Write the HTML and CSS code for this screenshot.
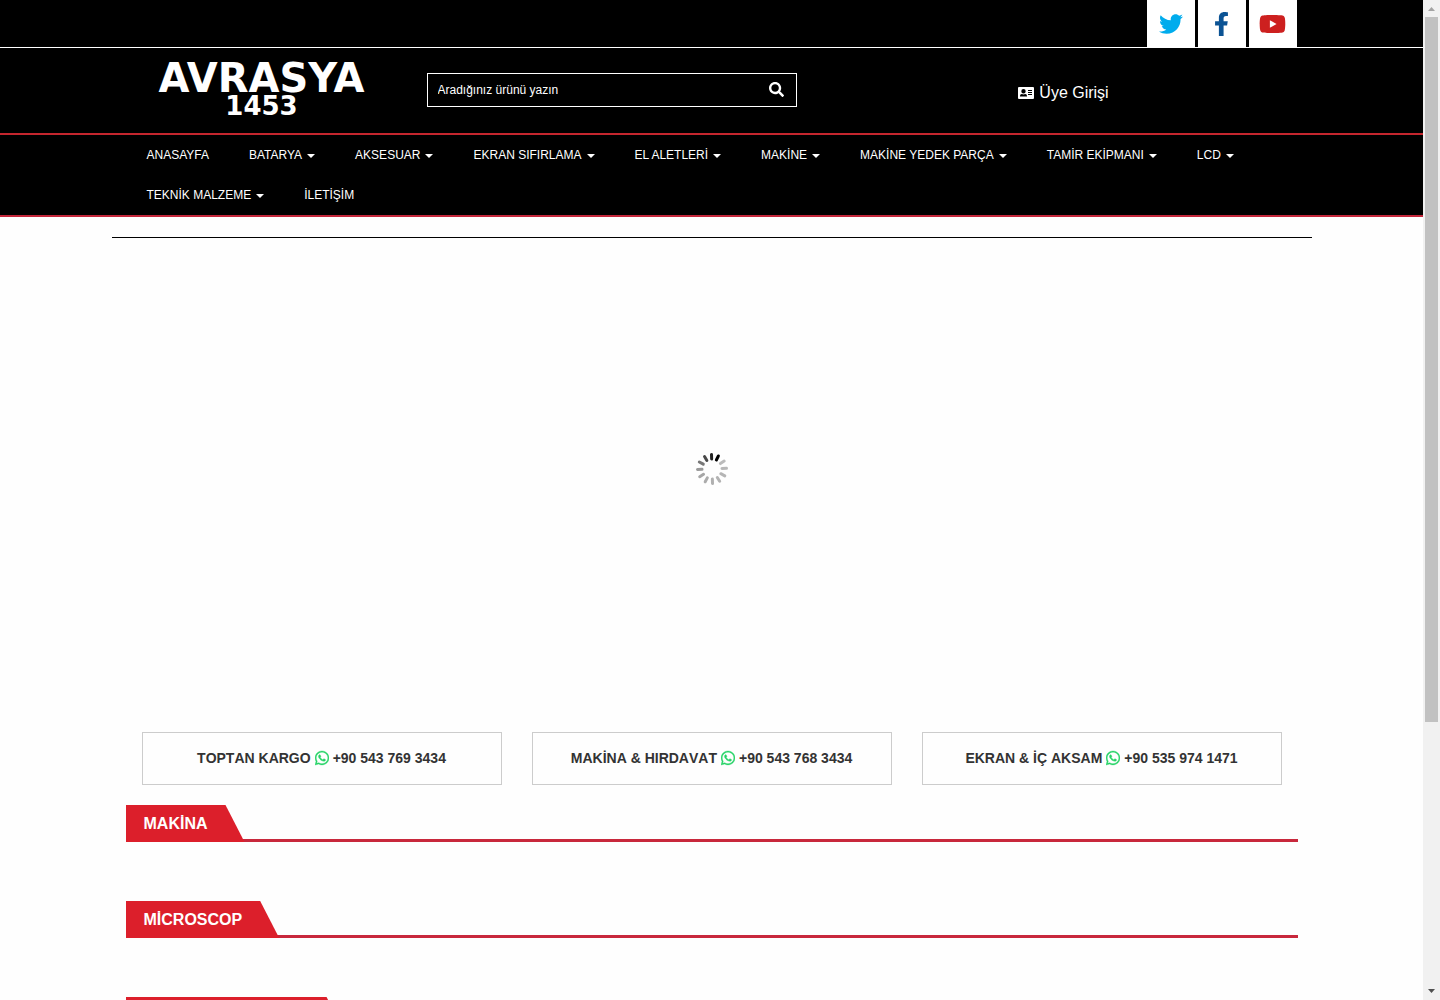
FILE: index.html
```html
<!DOCTYPE html>
<html lang="tr">
<head>
<meta charset="utf-8">
<meta name="viewport" content="width=device-width, initial-scale=1">
<title>Avrasya 1453</title>
<link rel="stylesheet" href="styles.css">
</head>
<body>
<svg class="defs" aria-hidden="true">
  <symbol id="whatsapp" viewBox="0 0 448 512"><path d="M380.9 97.1C339 55.1 283.2 32 223.9 32c-122.4 0-222 99.6-222 222 0 39.1 10.2 77.3 29.6 111L0 480l117.7-30.9c32.4 17.7 68.9 27 106.1 27h.1c122.3 0 224.1-99.6 224.1-222 0-59.3-25.200-115-67.100-157zm-157 341.600c-33.200 0-65.700-8.900-94-25.700l-6.700-4-69.800 18.300L72 359.200l-4.400-7c-18.500-29.400-28.200-63.300-28.200-98.200 0-101.700 82.800-184.500 184.600-184.500 49.300 0 95.600 19.200 130.400 54.100 34.800 34.900 56.200 81.200 56.100 130.500 0 101.800-84.900 184.600-186.600 184.600zm101.200-138.200c-5.500-2.800-32.800-16.200-37.900-18-5.100-1.900-8.800-2.800-12.500 2.800-3.700 5.600-14.300 18-17.600 21.800-3.200 3.700-6.500 4.200-12 1.400-32.600-16.300-54-29.100-75.500-66-5.700-9.800 5.700-9.100 16.300-30.300 1.800-3.700.9-6.900-.5-9.700-1.400-2.800-12.500-30.100-17.100-41.200-4.500-10.800-9.100-9.300-12.500-9.500-3.200-.2-6.900-.2-10.600-.2-3.700 0-9.700 1.400-14.800 6.900-5.100 5.600-19.400 19-19.400 46.300 0 27.300 19.900 53.700 22.600 57.400 2.800 3.700 39.100 59.700 94.800 83.800 35.200 15.200 49 16.500 66.600 13.900 10.700-1.600 32.800-13.400 37.400-26.400 4.600-13 4.600-24.100 3.200-26.400-1.300-2.500-5-3.900-10.500-6.600z"/></symbol>
</svg>
<div class="window">
  <div class="page">
    <div class="topbar">
      <div class="container social">
        <a href="#" class="social-link twitter" aria-label="Twitter"><svg width="24" height="24" viewBox="0 0 512 512"><path d="M459.370 151.716c.325 4.548.325 9.097.325 13.645 0 138.720-105.583 298.558-298.558 298.558-59.452 0-114.680-17.219-161.137-47.106 8.447.974 16.568 1.299 25.340 1.299 49.055 0 94.213-16.568 130.274-44.832-46.132-.975-84.792-31.188-98.112-72.772 6.498.974 12.995 1.624 19.818 1.624 9.421 0 18.843-1.300 27.614-3.573-48.081-9.747-84.143-51.980-84.143-102.985v-1.299c13.969 7.797 30.214 12.670 47.431 13.319-28.264-18.843-46.781-51.005-46.781-87.391 0-19.492 5.197-37.360 14.294-52.954 51.655 63.675 129.300 105.258 216.365 109.807-1.624-7.797-2.599-15.918-2.599-24.040 0-57.828 46.782-104.934 104.934-104.934 30.213 0 57.502 12.670 76.670 33.137 23.715-4.548 46.456-13.320 66.599-25.340-7.798 24.366-24.366 44.833-46.132 57.827 21.117-2.273 41.584-8.122 60.426-16.243-14.292 20.791-32.161 39.308-52.628 54.253z"/></svg></a>
        <a href="#" class="social-link facebook" aria-label="Facebook"><svg width="15" height="24" viewBox="0 0 320 512"><path d="M279.140 288l14.220-92.660h-88.910v-60.130c0-25.350 12.420-50.060 52.240-50.060h40.420V6.260S260.430 0 225.360 0c-73.220 0-121.080 44.380-121.080 124.720v70.620H22.890V288h81.390v224h100.170V288z"/></svg></a>
        <a href="#" class="social-link youtube" aria-label="YouTube"><svg width="27" height="24" viewBox="0 0 576 512"><path d="M549.655 124.083c-6.281-23.650-24.787-42.276-48.284-48.597C458.781 64 288 64 288 64S117.220 64 74.629 75.486c-23.497 6.322-42.003 24.947-48.284 48.597-11.412 42.867-11.412 132.305-11.412 132.305s0 89.438 11.412 132.305c6.281 23.650 24.787 41.500 48.284 47.821C117.220 448 288 448 288 448s170.780 0 213.371-11.486c23.497-6.321 42.003-24.171 48.284-47.821 11.412-42.867 11.412-132.305 11.412-132.305s0-89.438-11.412-132.305zm-317.510 213.508V175.185l142.739 81.205-142.739 81.201z"/></svg></a>
      </div>
    </div>
    <header class="header">
      <div class="container header-grid">
        <a href="#" class="logo"><span class="logo-name">AVRASYA</span><span class="logo-year">1453</span></a>
        <form class="search">
          <input class="search-input" type="text" placeholder="Aradığınız ürünü yazın" aria-label="Aradığınız ürünü yazın">
          <button class="search-button" type="button" aria-label="Ara"><svg width="15" height="15" viewBox="0 0 512 512"><path d="M505 442.700L405.300 343c-4.500-4.500-10.600-7-17-7H372c27.600-35.300 44-79.700 44-128C416 93.100 322.900 0 208 0S0 93.100 0 208s93.100 208 208 208c48.300 0 92.700-16.400 128-44v16.300c0 6.400 2.500 12.500 7 17l99.700 99.700c9.400 9.400 24.600 9.400 33.900 0l28.300-28.300c9.400-9.400 9.400-24.600.1-34zM208 336c-70.700 0-128-57.200-128-128 0-70.700 57.200-128 128-128 70.700 0 128 57.200 128 128 0 70.700-57.200 128-128 128z"/></svg></button>
        </form>
        <a href="#" class="login"><svg width="16" height="12" viewBox="0 0 16 12"><path fill-rule="evenodd" d="M1 0h14q1 0 1 1v10q0 1-1 1H1q-1 0-1-1V1q0-1 1-1zM5.500 2a2.200 2.200 0 1 0 0 4.400 2.200 2.200 0 0 0 0-4.400zM3.800 7Q2 7.200 2 9v.6h7V9q0-1.800-1.800-2-1.700.8-3.400 0zM10 3v1h4V3zM10 5v1h4V5zM10 7v1h4V7z"/></svg>Üye Girişi</a>
      </div>
    </header>
    <nav class="nav">
      <ul class="container menu">
        <li><a href="#">ANASAYFA</a></li>
        <li><a href="#" class="drop">BATARYA</a></li>
        <li><a href="#" class="drop">AKSESUAR</a></li>
        <li><a href="#" class="drop">EKRAN SIFIRLAMA</a></li>
        <li><a href="#" class="drop">EL ALETLERİ</a></li>
        <li><a href="#" class="drop">MAKİNE</a></li>
        <li><a href="#" class="drop">MAKİNE YEDEK PARÇA</a></li>
        <li><a href="#" class="drop">TAMİR EKİPMANI</a></li>
        <li><a href="#" class="drop">LCD</a></li>
        <li><a href="#" class="drop">TEKNİK MALZEME</a></li>
        <li><a href="#">İLETİŞİM</a></li>
      </ul>
    </nav>
    <main class="container main">
      <div class="slider" role="status" aria-label="Yükleniyor">
        <svg width="34" height="34" viewBox="-17 -17 34 34" stroke-width="3" stroke-linecap="round">
          <path d="M0-10V-14.500" stroke="#222" transform="rotate(-2)"/>
          <path d="M0-10V-14.500" stroke="#000" transform="rotate(26)"/>
          <path d="M0-10V-14.500" stroke="#bbb" transform="rotate(57)"/>
          <path d="M0-10V-14.500" stroke="#b8b8b8" transform="rotate(87)"/>
          <path d="M0-10V-14.500" stroke="#b5b5b5" transform="rotate(118)"/>
          <path d="M0-10V-14.500" stroke="#b3b3b3" transform="rotate(148)"/>
          <path d="M0-10V-14.500" stroke="#b0b0b0" transform="rotate(178)"/>
          <path d="M0-10V-14.500" stroke="#acacac" transform="rotate(208)"/>
          <path d="M0-10V-14.500" stroke="#a6a6a6" transform="rotate(238)"/>
          <path d="M0-10V-14.500" stroke="#999" transform="rotate(268)"/>
          <path d="M0-10V-14.500" stroke="#777" transform="rotate(299)"/>
          <path d="M0-10V-14.500" stroke="#484848" transform="rotate(329)"/>
        </svg>
      </div>
      <div class="contacts">
        <a href="#" class="contact">TOPTAN KARGO <svg class="wa" width="14" height="16"><use href="#whatsapp"/></svg> +90 543 769 3434</a>
        <a href="#" class="contact">MAKİNA &amp; HIRDAVAT <svg class="wa" width="14" height="16"><use href="#whatsapp"/></svg> +90 543 768 3434</a>
        <a href="#" class="contact">EKRAN &amp; İÇ AKSAM <svg class="wa" width="14" height="16"><use href="#whatsapp"/></svg> +90 535 974 1471</a>
      </div>
      <section class="category"><h2 class="category-title">MAKİNA</h2></section>
      <section class="category"><h2 class="category-title">MİCROSCOP</h2></section>
      <section class="category"><h2 class="category-title">TAMİR EKİPMANLARI</h2></section>
    </main>
  </div>
  <div class="scrollbar" aria-hidden="true">
    <svg width="17" height="17" viewBox="0 0 17 17" fill="#a3a3a3"><path d="M5 11h7L8.500 7z"/></svg>
    <div class="track"><div class="thumb"></div></div>
    <svg width="17" height="17" viewBox="0 0 17 17" fill="#505050"><path d="M5 6h7l-3.500 4z"/></svg>
  </div>
</div>
</body>
</html>
```
FILE: styles.css
```css
* { box-sizing: border-box; }

body {
  margin: 0;
  background: #fefefe;
  color: #333;
  font-family: "Liberation Sans", Arial, sans-serif;
  font-size: 14px;
}

a { color: inherit; text-decoration: none; }
svg { fill: currentColor; }
.scrollbar svg:first-child { fill: #a3a3a3; }
.scrollbar svg:last-child { fill: #505050; }
.defs { display: none; }

.window {
  display: grid;
  grid-template-columns: minmax(0, 1fr) 17px;
  height: 100vh;
}

.page {
  overflow-y: auto;
  scrollbar-width: none;
}

.container {
  width: 100%;
  max-width: 1200px;
  margin: 0 auto;
}

/* Top bar */
.topbar {
  background: #000;
  border-bottom: 1px solid #fff;
}

.social {
  display: flex;
  justify-content: flex-end;
  gap: 3px;
  padding: 0 15px;
}

.social-link {
  display: flex;
  align-items: center;
  justify-content: center;
  width: 48px;
  height: 47px;
  background: #fff;
}

.twitter { color: #00aced; }
.facebook { color: #0b5394; }
.youtube { color: #cd201f; }

/* Header */
.header { background: #000; color: #fff; }

.header-grid {
  display: grid;
  grid-template-columns: 3fr 4fr 5fr;
  align-items: center;
  min-height: 85px;
}

.logo {
  display: flex;
  flex-direction: column;
  align-items: center;
  font-family: "DejaVu Sans", sans-serif;
  font-weight: bold;
}

.logo-name { font-size: 40px; line-height: 30px; }
.logo-year { font-size: 26px; line-height: 26px; }

.search {
  display: flex;
  height: 34px;
  margin: 0 15px 2px;
  border: 1px solid #fff;
}

.search-input {
  flex: 1;
  min-width: 0;
  padding: 0 10px;
  border: 0;
  outline: 0;
  background: transparent;
  color: #fff;
  font: 12px "Liberation Sans", Arial, sans-serif;
}

.search-input::placeholder { color: #fff; opacity: 1; }

.search-button {
  display: flex;
  align-items: center;
  justify-content: center;
  width: 38px;
  padding: 0;
  border: 0;
  background: transparent;
  color: #fff;
  cursor: pointer;
}

.login {
  display: flex;
  align-items: center;
  justify-content: center;
  gap: 5px;
  padding: 5px 0 0 4px;
  font-size: 16px;
}

/* Navigation */
.nav {
  background: #000;
  border-top: 2px solid #c4262e;
  border-bottom: 2px solid #c4263a;
}

.menu {
  display: flex;
  flex-wrap: wrap;
  padding: 0 15px;
  list-style: none;
}

.menu a {
  display: flex;
  align-items: center;
  gap: 5px;
  padding: 0 20px;
  color: #fff;
  font-size: 12px;
  line-height: 40px;
}

.drop::after {
  content: "";
  margin-top: 2px;
  border: 4px solid transparent;
  border-top-color: #fff;
  border-bottom: 0;
}

/* Content */
.main {
  margin-top: 20px;
  border-top: 1px solid #000;
}

.slider {
  display: flex;
  align-items: center;
  justify-content: center;
  height: 462px;
}

.contacts {
  display: grid;
  grid-template-columns: repeat(3, 1fr);
  gap: 30px;
  margin: 32px 30px 20px;
}

.contact {
  display: flex;
  align-items: center;
  justify-content: center;
  gap: 4px;
  height: 53px;
  padding-bottom: 2px;
  border: 1px solid #ccc;
  font-weight: bold;
  font-kerning: none;
}

.wa { color: #25d366; stroke: currentColor; stroke-width: 12; }

.category {
  display: flex;
  margin: 0 14px 59px;
  border-bottom: 3px solid #c8283c;
}

.category-title {
  margin: 0 0 -3px;
  padding: 0 37px 0 18px;
  background: #dc1f2b;
  clip-path: polygon(0 0, calc(100% - 19px) 0, 100% 100%, 0 100%);
  color: #fff;
  font-size: 16px;
  line-height: 37px;
}

/* Window scrollbar */
.scrollbar {
  display: flex;
  flex-direction: column;
  background: #f1f1f1;
}

.track { flex: 1; padding: 0 2px; }
.thumb { height: 73%; background: #c1c1c1; }
```
